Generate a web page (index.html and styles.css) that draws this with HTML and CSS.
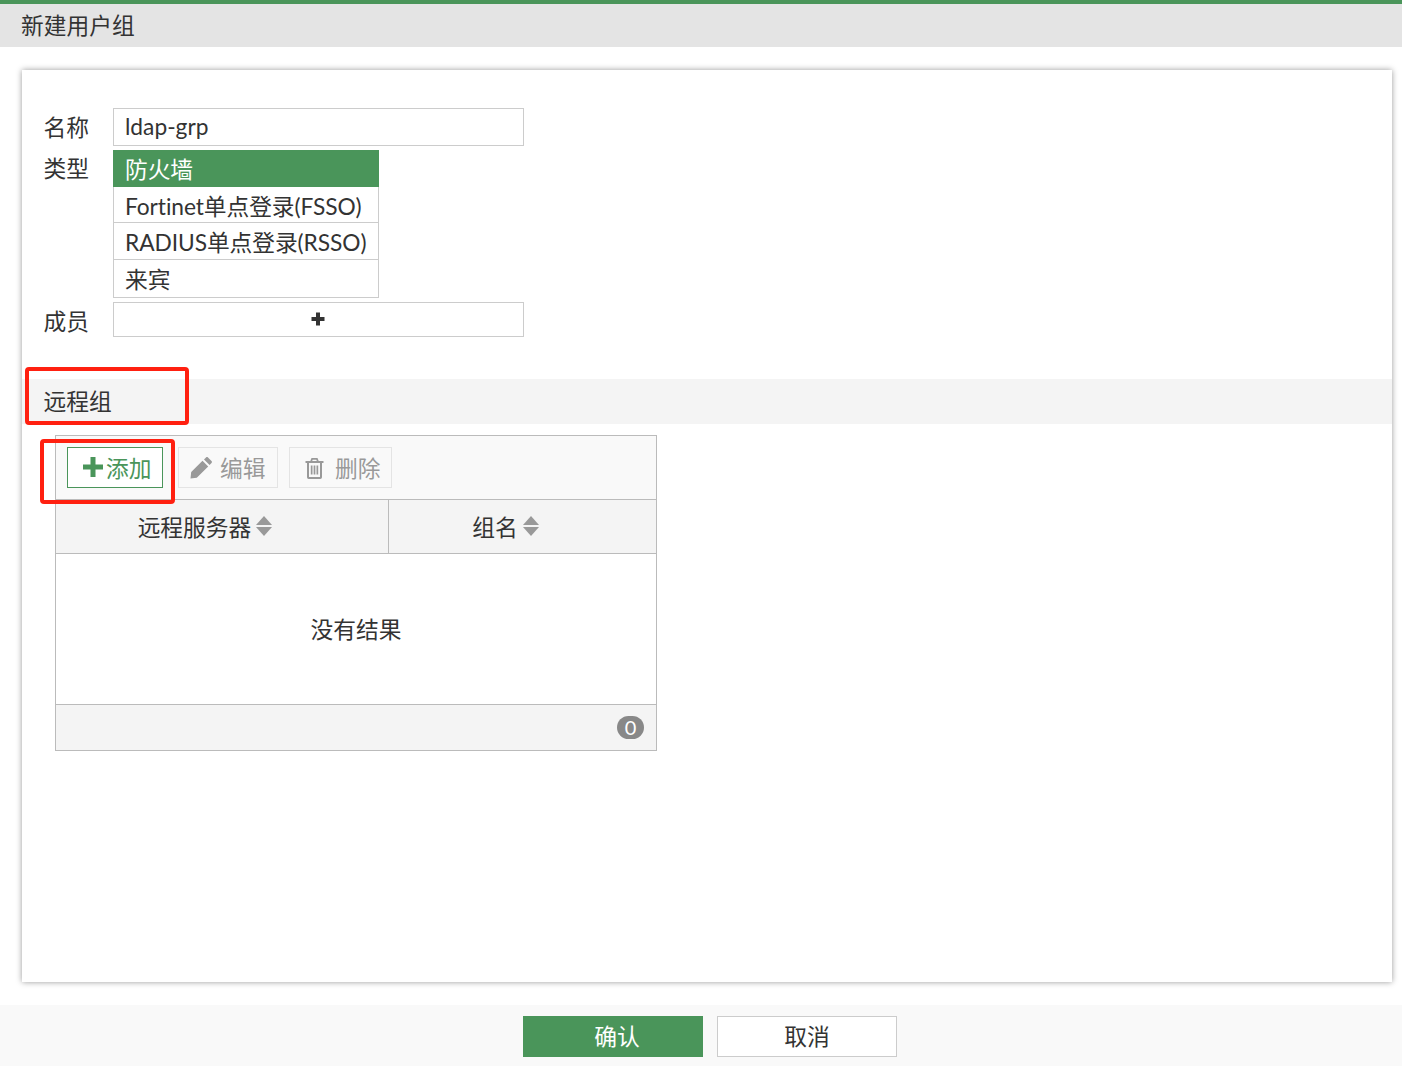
FILE: index.html
```html
<!DOCTYPE html>
<html lang="zh">
<head>
<meta charset="utf-8">
<title>新建用户组</title>
<link rel="stylesheet" href="styles.css">
</head>
<body>
<div class="page">
  <header class="title-bar">新建用户组</header>
  <main class="card">
    <form class="form">
      <div class="row row-name">
        <label class="label">名称</label>
        <div class="input">ldap-grp</div>
      </div>
      <div class="row row-type">
        <label class="label">类型</label>
        <div class="type-list">
          <div class="type-item active">防火墙</div>
          <div class="type-item item-fsso">Fortinet单点登录(FSSO)</div>
          <div class="type-item item-rsso">RADIUS单点登录(RSSO)</div>
          <div class="type-item item-guest">来宾</div>
        </div>
      </div>
      <div class="row row-member">
        <label class="label">成员</label>
        <div class="member-add">
          <svg class="plus-dark" viewBox="0 0 14 14" width="14" height="14"><path d="M5 .5h4v4.500h4.500v4H9v4.500H5V9H.5V5H5z"/></svg>
        </div>
      </div>
    </form>
    <section class="section-bar">远程组</section>
    <div class="table-wrap">
      <div class="toolbar">
        <button class="btn btn-add" type="button">
          <svg viewBox="0 0 20 20" width="20" height="20"><path d="M7.500 0h5v7.500H20v5h-7.500V20h-5v-7.500H0v-5h7.500z"/></svg>添加
        </button>
        <button class="btn btn-off btn-edit" type="button">
          <svg viewBox="0 0 22 22" width="22" height="22"><path d="M12.500 3.800l5.700 5.700L6.800 20.800l-6.300.7.700-6.400zM14 2.400l2-1.900c.6-.6 1.400-.6 2 0l3.500 3.500c.6.600.6 1.400 0 2L19.600 8z"/></svg>编辑
        </button>
        <button class="btn btn-off btn-del" type="button">
          <svg viewBox="1 1 18 21" width="19" height="21"><path fill-rule="evenodd" d="M7 1h6l1.200 3H19v2h-1.500v14c0 1-.7 2-1.700 2H4.200c-1 0-1.700-1-1.700-2V6H1V4h4.800zM8.200 2.800 7.700 4h4.600l-.5-1.200zM4.500 6v14h11V6zM6.300 8.500H8v9H6.300zm2.850 0h1.700v9h-1.700zm2.850 0h1.700v9H12z"/></svg>删除
        </button>
      </div>
      <div class="thead">
        <div class="th th-server">远程服务器<span class="sort"><i class="up"></i><i class="down"></i></span></div>
        <div class="th th-group">组名<span class="sort"><i class="up"></i><i class="down"></i></span></div>
      </div>
      <div class="tbody">没有结果</div>
      <div class="tfoot"><span class="count">0</span></div>
    </div>
    <div class="mark mark-section"></div>
    <div class="mark mark-add"></div>
  </main>
  <footer class="footer">
    <button class="action primary" type="button">确认</button>
    <button class="action" type="button">取消</button>
  </footer>
</div>
</body>
</html>
```
FILE: styles.css
```css
* { box-sizing: border-box; }
html, body { margin: 0; padding: 0; background: #fff; }
body {
  font-family: Lato, "Noto Sans CJK SC", sans-serif;
  font-size: 22.75px;
  color: #333;
}
.page { width: 1402px; height: 1066px; display: flex; flex-direction: column; overflow: hidden; }

.title-bar {
  height: 47px;
  border-top: 4px solid #4a955a;
  background: #e4e4e4;
  padding-left: 21px;
  line-height: 44px;
  flex: none;
}

.card {
  position: relative;
  margin: 23px 10px 0 22px;
  height: 912px;
  background: #fff;
  box-shadow: 0 0 6px rgba(0,0,0,.4);
  padding-top: 38px;
  flex: none;
}

.form { display: flex; flex-direction: column; gap: 4px; padding-left: 21px; }
.row { display: flex; }
.label { width: 70px; height: 38px; padding-left: 0.5px; flex: none; line-height: 40px; }
.row-type .label { line-height: 38px; }

.input {
  width: 411px; height: 38px;
  border: 1px solid #ccc;
  padding-left: 11px;
  line-height: 36px;
}
.type-list { width: 266px; height: 148px; display: flex; flex-direction: column; border: 1px solid #ccc; border-top: 0; }
.type-item {
  height: 37px;
  padding-left: 11px;
  border-bottom: 1px solid #ccc;
  white-space: nowrap;
  letter-spacing: -0.08px;
  line-height: 40px;
}
.item-fsso { height: 36px; }
.item-guest { border-bottom: 0; }
.type-item.active {
  background: #4a955a;
  color: #fff;
  margin: 0 -1px;
  border-bottom: 0;
  padding-left: 12px;
}
.member-add {
  width: 411px; height: 35px;
  border: 1px solid #ccc;
  display: flex; align-items: center; justify-content: center;
}
.plus-dark { fill: #333; margin: -2px 1px 0 0; }

.section-bar {
  margin-top: 39px;
  height: 45px;
  background: #f4f4f4;
  padding-left: 21.500px;
  line-height: 46px;
}

.table-wrap {
  margin: 11px 0 0 33px;
  width: 602px;
  border: 1px solid #bbb;
}
.toolbar {
  height: 64px;
  background: #f9f9f9;
  border-bottom: 1px solid #bbb;
  padding: 11px 0 0 11px;
  display: flex;
  gap: 11px;
  align-items: flex-start;
}
.btn {
  font: inherit;
  height: 41px;
  background: #fff;
  display: flex;
  align-items: center;
  padding: 0 0 1px;
  cursor: pointer;
  white-space: nowrap;
}
.btn svg { position: relative; top: 0; }
.btn-add {
  width: 96px;
  border: 1px solid #4a955a;
  color: #4a955a;
  padding-left: 15px;
  margin-right: 4px;
}
.btn-add svg { fill: #4a955a; margin-right: 3px; }
.btn-off {
  border: 1px solid #e4e4e4;
  background: #f9f9f9;
  color: #999;
}
.btn-off svg { fill: #999; }
.btn-edit { width: 100px; padding-left: 11px; }
.btn-edit svg { margin-right: 8px; top: 1px; }
.btn-del { width: 103px; padding-left: 15px; }
.btn-del svg { margin-right: 11px; top: 1px; }

.thead { display: flex; height: 54px; background: #f4f4f4; border-bottom: 1px solid #bbb; }
.th { display: flex; align-items: center; justify-content: center; padding-right: 34px; padding-bottom: 1px; }
.th-server { width: 333px; border-right: 1px solid #bbb; }
.th-group { flex: 1; }
.sort { display: flex; flex-direction: column; gap: 2px; margin-left: 5px; }
.sort i { display: block; width: 0; height: 0; border-left: 8px solid transparent; border-right: 8px solid transparent; }
.sort .up { border-bottom: 9px solid #999; }
.sort .down { border-top: 9px solid #999; }

.tbody {
  height: 150px;
  background: #fff;
  display: flex; align-items: center; justify-content: center;
  padding-bottom: 2px;
}
.tfoot {
  height: 46px;
  border-top: 1px solid #bbb;
  background: #f4f4f4;
  display: flex; align-items: center; justify-content: flex-end;
  padding-right: 12px;
}
.count {
  width: 27px; height: 23px;
  border-radius: 12px;
  background: #888;
  color: #fff;
  font-size: 20px;
  line-height: 23px;
  text-align: center;
}

.mark { position: absolute; border: 4.500px solid #ff2010; border-radius: 4px; pointer-events: none; }
.mark-section { left: 3px; top: 297px; width: 164px; height: 58px; }
.mark-add { left: 18px; top: 369px; width: 135px; height: 65px; }

.footer {
  margin-top: 23px;
  height: 61px;
  background: #f9f9f9;
  display: flex;
  justify-content: center;
  gap: 14px;
  padding-top: 11px;
  padding-left: 18px;
  flex: none;
}
.action {
  font: inherit;
  color: #333;
  width: 180px; height: 41px;
  border: 1px solid #ccc;
  background: #fff;
  padding: 0 0 3px;
  cursor: pointer;
}
.action.primary { background: #4a955a; border-color: #4a955a; color: #fff; padding-left: 8px; }
```
